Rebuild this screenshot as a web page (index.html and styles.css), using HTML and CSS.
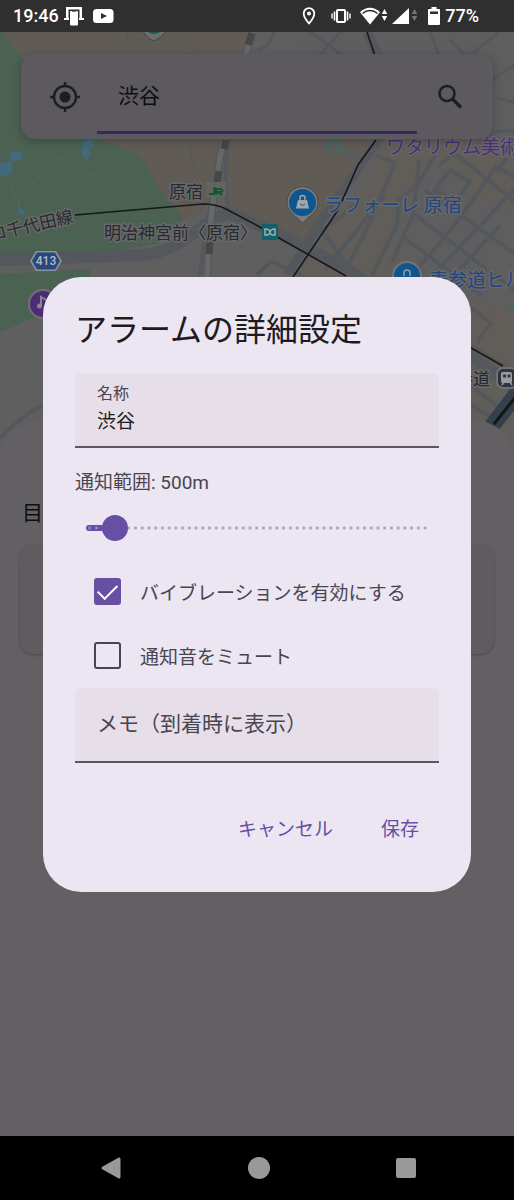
FILE: index.html
```html
<!DOCTYPE html>
<html lang="ja">
<head>
<meta charset="utf-8">
<meta name="viewport" content="width=device-width, initial-scale=1">
<title>アラームの詳細設定</title>
<link rel="stylesheet" href="styles.css">
</head>
<body>
<div class="screen">
  <header class="status">
    <span class="status-text">19:46</span>
    <svg class="ic-cast" width="20" height="20" viewBox="0 0 20 20"><path d="M2 1h16v3h-2.500V3.500h-11V12H2zM15.500 3H18v9h-2.500zM0 12h5v2H0zM15 12h5v2h-5z" fill="#fff"/><rect x="6" y="5" width="8" height="14.500" rx="1" fill="#fff"/><path d="M8 5.500h4" stroke="#777" stroke-width="1"/></svg>
    <svg class="ic-video" width="21" height="16" viewBox="0 0 21 16"><rect x="0" y="1" width="20.500" height="14" rx="3.500" fill="#fff"/><path d="M8 5l6 3-6 3z" fill="#2f2f2f"/></svg>
    <span class="status-space"></span>
    <svg class="ic-pin" width="14" height="18" viewBox="0 0 14 18"><path d="M7 1.200a5.300 5.300 0 0 0-5.300 5.300C1.700 10.400 7 16.500 7 16.500s5.300-6.100 5.300-10A5.300 5.300 0 0 0 7 1.200z" fill="none" stroke="#fff" stroke-width="1.800"/><circle cx="7" cy="6.500" r="2" fill="#fff"/></svg>
    <svg class="ic-vib" width="20" height="16" viewBox="0 0 20 16" stroke="#fff" fill="none"><rect x="6" y="2" width="8" height="12" rx=".8" stroke-width="2"/><path d="M3.500 3.500v9M16.500 3.500v9" stroke-width="1.600"/><path d="M1 5.500v5M19 5.500v5" stroke-width="1.400"/></svg>
    <svg class="ic-wifi" width="28" height="18" viewBox="0 0 28 18"><path d="M10 17.500L0 5.300C5.500-.7 14.500-.7 20 5.300z" fill="#fff"/><path d="M2.500 6.500c4.500-4 10.500-4 15 0" stroke="#2f2f2f" stroke-width="1.300" fill="none"/><path d="M24.500 2l2.700 5h-5.400zM24.500 14l2.700-5h-5.400z" fill="#fff"/></svg>
    <svg class="ic-cell" width="26" height="18" viewBox="0 0 26 18"><path d="M17 1v16H0z" fill="#fff"/><path d="M22.500 2l2.700 5h-5.400zM22.500 14l2.700-5h-5.400z" fill="#777"/></svg>
    <svg class="ic-batt" width="12" height="18" viewBox="0 0 12 18"><path d="M3.500 0h5v2H11q1 0 1 1v14q0 1-1 1H1q-1 0-1-1V3q0-1 1-1h2.500z" fill="#fff"/><path d="M2 4.500h8V7H2z" fill="#2f2f2f"/></svg>
    <span class="status-text">77%</span>
  </header>

  <main class="app">
    <svg class="map" viewBox="0 32 514 430" preserveAspectRatio="xMinYMin slice" role="img" aria-label="地図">
      <rect x="0" y="32" width="514" height="430" fill="#615d58"/>
      <path d="M0 255L200 215 215 32H325L380 160 294 275 240 462H0z" fill="#605f60"/>
      <path d="M3 32H250L212 205 183 220 100 140zM225 135h150l-75 115-75-45z" fill="#605b55"/>
      <path d="M0 32h3L22 58 95 138l33 12 12 5 20 35 23 28-23 25-60 10-100 3z" fill="#4b6152"/>
      <path d="M0 274l90-5v30l-47 15-43 18z" fill="#4b6152"/>
      <path d="M280 32h234v108H380zM395 200l40-35 79 55v90l-130-30z" fill="#5e5e5f"/>
      <!-- ponds and park paths -->
      <g fill="#426a7a"><ellipse cx="5" cy="169" rx="8" ry="7"/><ellipse cx="16" cy="156" rx="7" ry="5"/><path d="M82 156q-1-15 6-17l7 2-3 7-4-1 3 8-4 4zM17 204l4 3 5 9-7-2z"/></g>
      <path d="M5 168l10-10" stroke="#426a7a" stroke-width="3" fill="none"/>
      <path d="M26 190l28-30 20-5 15 19 7 1 30-24M7 178l13 28" stroke="#566a5d" stroke-width="1" stroke-dasharray="5 3" fill="none"/>
      <path d="M127 32v8h45q18 1 23 14M189 138q2 22 6 40" stroke="#515b58" fill="none"/>
      <!-- roads -->
      <g fill="none" stroke="#54585c" stroke-linejoin="round">
        <path d="M0 260l145-5q28-3 65-34l18-8q55 20 125 60l100 70 61 45" stroke-width="12"/>
        <path d="M367 32l12 25 3 78-60 85-35 55" stroke-width="9"/>
        <path d="M230 135q-8 42-2 78M200 275l5-45 23-95" stroke-width="4"/>
        <path d="M257 50q12-2 17-18M302 75l38-43M310 32l35 25M430 32l10 26M450 40l18 18 30-26M492 80l22-15M498 98l16 4M480 140q16-12 34-8" stroke-width="3"/>
        <path d="M375 155l20 8-30 70-22 42M355 205l-45 35M317 225l38 50M325 270l60-75M419 160l-2 25-18 15-2 25-25 50M435 155l-18 32-5 30-20 45M440 165l14-12 60 48M435 190l15-20 20 12-15 20zM425 190l89 63M414 214l100 76M402 236l80 60M514 190l-83 87M497 165l-42 60-45 52M500 225l-50 55M257 275l14-14 30 14" stroke-width="4"/>
        <path d="M471 308l20 15-14 20M471 345l43 28M471 405l20 12M471 385l30 25M497 167l17 10M497 172l9-14" stroke-width="4"/>
        <path d="M0 438q30-30 43-32" stroke-width="4"/>
      </g>
      <path d="M471 345l43-35M480 340l30-38" stroke="#6b5e57" stroke-dasharray="4 3" fill="none"/>
      <path d="M25 345l17 40M28 354l8-3v-8l7-4M31 362l8 2 4-5" stroke="#46695c" fill="none"/>
      <path d="M330 151q0-10 9-11l4 6-5 6zM335 143l4 8M324 152l6-12M344 150l12 10" stroke="#3d6c6d" stroke-width="1.500" fill="none"/>
      <path d="M508 306l6-6v12z" fill="#456b58"/>
      <!-- railways -->
      <path d="M253 32l-8 25-25 100-9 60-4 60" fill="none" stroke="#56595c" stroke-width="8"/>
      <path d="M253 32l-8 25-25 100-9 60-4 60" fill="none" stroke="#676869" stroke-width="5"/>
      <path d="M252 33l-4 12M226 140l-2 9M219 171l-2 12M210 240l-1 14" fill="none" stroke="#474747" stroke-width="7"/>
      <path d="M75 215l128-11q13 0 23 5l32 17 88 50M471 348l32 18M367 32l8 24M376 140l-18 25-20 45-45 67" fill="none" stroke="#171819" stroke-width="1.600"/>
      <path d="M518 392l-26 34" stroke="#34404b" stroke-width="16"/><path d="M518 394l-24 30" stroke="#111619" stroke-width="3"/>
      <path d="M143 31q3 7 11 10 8-3 12-10z" fill="#6c6f6e" stroke="#444"/><path d="M148 32h12q-6 4-12 0" fill="#1c594e"/>
      <path d="M206 182h20v15h-20z" fill="#62645f"/>
      <path d="M214.500 187v5q0 2-2 2H209M216 195v-6h5q3 2 0 3h-4l5 3" fill="none" stroke="#14572d" stroke-width="2"/>
      <path d="M36 251h20l6 10-6 10H36l-6-10z" fill="#8a9399"/>
      <path d="M37 252.500h18l5 8.500-5 8.500H37L32 261z" fill="#26487c"/>
      <text class="route" x="46" y="265" text-anchor="middle">413</text>
      <g class="place">
        <text x="169" y="198">原宿</text>
        <text x="104" y="239">明治神宮前〈原宿〉</text>
        <text x="-9" y="239" transform="rotate(-13 0 239)">ロ千代田線</text>
        <text x="456" y="385">参道</text>
      </g>
      <g class="shop">
        <text x="324" y="212">ラフォーレ 原宿</text>
        <text x="429" y="287">表参道ヒルズ</text>
      </g>
      <text class="museum" x="386" y="154">ワタリウム美術館</text>
      <rect x="262" y="224" width="16" height="16" rx="1" fill="#13606d"/>
      <path d="M265 229q5 0 5 4 0-4 5-4v6h-3l-2-2-2 2h-3z" fill="none" stroke="#a0b0b1" stroke-width="1.500"/>
      <path d="M302.500 223l-8-7.500a15.500 15.500 0 1 1 16 0z" fill="#7b7c7e" stroke="#4b4b4b"/>
      <circle cx="302.500" cy="202.500" r="13.500" fill="#0f568f"/>
      <path d="M298 200h9l2 8.500h-13z" fill="#a3a6a8"/><path d="M300 201v-3q0-2.500 2.500-2.500T305 198v3" fill="none" stroke="#a3a6a8" stroke-width="1.500"/><path d="M300 204q2.500 3 5 0" fill="none" stroke="#0f568f"/>
      <circle cx="407" cy="276" r="15" fill="#737579"/><circle cx="407" cy="276" r="13" fill="#0f568f"/><path d="M404 276v-3q0-3 3-3t3 3v3" fill="none" stroke="#9a9da0" stroke-width="1.500"/>
      <circle cx="43" cy="304" r="15" fill="#716f75"/><circle cx="43" cy="304" r="13" fill="#4c2d72"/><circle cx="39.500" cy="306" r="2.500" fill="#8b8494"/><path d="M41 306v-9l5 3" stroke="#8b8494" stroke-width="2" fill="none"/>
      <rect x="497" y="368" width="20" height="20" rx="6" fill="#2f353e" stroke="#6f7275" stroke-width="2"/><rect x="501" y="372" width="11" height="11" rx="2" fill="#9a9da0"/><path d="M503 374.500h3v3h-3zM507.500 374.500h3v3h-3z" fill="#2f353e"/><path d="M502 385l2-3M512 385l-2-3" stroke="#9a9da0" stroke-width="1.500"/>
    </svg>

    <div class="home">
      <form class="search">
        <button type="button" class="icon-btn" aria-label="現在地">
          <svg width="32" height="32" viewBox="0 0 32 32" fill="none" stroke="#1e1d21" stroke-width="2.400"><circle cx="16" cy="16" r="11"/><path d="M16 1v5M16 26v5M1 16h5M26 16h5"/><circle cx="16" cy="16" r="5.500" fill="#1e1d21" stroke="none"/></svg>
        </button>
        <input class="search-input" type="text" value="渋谷" aria-label="目的地を検索">
        <button type="button" class="icon-btn" aria-label="検索">
          <svg width="28" height="28" viewBox="0 0 28 28" fill="none" stroke="#1e1d21" stroke-width="2.600"><circle cx="11" cy="10.500" r="7.500"/><path d="M16.500 16l8.500 8.500" stroke-width="3.200"/></svg>
        </button>
      </form>
      <section class="sheet">
        <h2 class="sheet-title">目的地</h2>
        <div class="card"></div>
      </section>
    </div>

    <div class="overlay">
      <form class="dialog" role="dialog" aria-labelledby="dlg-title">
        <h1 class="title" id="dlg-title">アラームの詳細設定</h1>
        <div class="field">
          <label class="field-label" for="name">名称</label>
          <input class="field-input" id="name" type="text" value="渋谷">
        </div>
        <label class="range-label" for="range">通知範囲: 500m</label>
        <div class="slider">
          <span class="ticks"></span>
          <span class="active" style="width: 8%"></span>
          <input class="range" id="range" type="range" min="100" max="5100" step="100" value="500">
        </div>
        <label class="check"><input type="checkbox" checked>バイブレーションを有効にする</label>
        <label class="check"><input type="checkbox">通知音をミュート</label>
        <div class="field">
          <input class="memo" type="text" placeholder="メモ（到着時に表示）" aria-label="メモ（到着時に表示）">
        </div>
        <div class="actions">
          <button type="button" class="action">キャンセル</button>
          <button type="button" class="action">保存</button>
        </div>
      </form>
    </div>
  </main>

  <nav class="nav">
    <button type="button" class="nav-btn" aria-label="戻る"><svg width="24" height="24" viewBox="0 0 24 24"><path d="M20 3v18L4 12z" fill="#999" stroke="#999" stroke-width="3" stroke-linejoin="round"/></svg></button>
    <button type="button" class="nav-btn" aria-label="ホーム"><svg width="24" height="24" viewBox="0 0 24 24"><circle cx="12" cy="12" r="11" fill="#999"/></svg></button>
    <button type="button" class="nav-btn" aria-label="履歴"><svg width="24" height="24" viewBox="0 0 24 24"><rect x="2" y="2" width="20" height="20" rx="2" fill="#999"/></svg></button>
  </nav>
</div>
</body>
</html>
```

FILE: styles.css
```css
* { box-sizing: border-box; }

body {
  margin: 0;
  background: #000;
  font-family: Roboto, "Noto Sans CJK JP", sans-serif;
}

button, input { font: inherit; }

button {
  border: 0;
  padding: 0;
  background: none;
}

svg { display: block; flex: none; }

.screen {
  min-height: 100vh;
  display: grid;
  grid-template-rows: 32px 1fr 64px;
}

/* Status bar */
.status {
  display: flex;
  align-items: center;
  padding: 0 35px 0 13px;
  background: #2f2f2f;
  color: #fff;
}

.status-text {
  font-size: 18px;
  line-height: 32px;
  font-weight: 500;
}

.status-space { flex: 1; }
.ic-cast { margin-left: 5px; }
.ic-video { margin-left: 9px; }
.ic-vib { margin-left: 15px; }
.ic-wifi { margin-left: 9px; }
.ic-cell { margin-left: 4px; }
.ic-batt { margin: 0 5px 0 10px; }

/* Home screen, dimmed behind the dialog */
.app {
  display: grid;
  position: relative;
  overflow: hidden;
  background: #636063;
}

.map {
  position: absolute;
  top: 0;
  left: 0;
  width: 100%;
  height: 430px;
}

.map text { font-family: Roboto, "Noto Sans CJK JP", sans-serif; }

.place text, .shop text, .museum {
  paint-order: stroke;
  stroke: #686868;
  stroke-width: 3px;
  stroke-linejoin: round;
}

.place text { font-size: 17px; fill: #272a30; }
.shop text { font-size: 19px; fill: #234581; }
.museum { font-size: 19px; fill: #4b2f78; }
.map .route { font-size: 12px; font-weight: 500; fill: #b5bcc5; }

.home {
  grid-area: 1 / 1;
  position: relative;
  display: flex;
  flex-direction: column;
  gap: 282px;
  padding-top: 22px;
}

.search {
  display: grid;
  grid-template-columns: 76px 1fr 76px;
  height: 85px;
  margin: 0 21px;
  border-radius: 14px;
  background: #5c595f;
  box-shadow: 0 2px 8px rgba(0, 0, 0, .25);
}

.icon-btn {
  display: grid;
  place-items: center;
  padding-left: 11px;
}

.icon-btn:last-child { padding: 0 11px 0 0; }

.search-input {
  min-width: 0;
  height: 80px;
  padding: 2px 21px 0;
  border: 0;
  border-bottom: 3px solid #352a5c;
  background: none;
  color: #0e0d10;
  font-size: 21px;
  outline: none;
}

.sheet {
  flex: 1;
  padding: 76px 20px 0;
  border-radius: 38px 38px 0 0;
  background: #636063;
}

.sheet-title {
  margin: 0 0 16px 2px;
  color: #0e0d10;
  font-size: 21px;
  line-height: 32px;
  font-weight: 400;
}

.card {
  height: 109px;
  border-radius: 14px;
  background: #5e5b61;
  box-shadow: 0 1px 3px rgba(0, 0, 0, .25);
}

/* Dialog */
.overlay {
  grid-area: 1 / 1;
  position: relative;
  display: grid;
  align-items: center;
  padding: 0 43px;
}

.dialog {
  display: flex;
  flex-direction: column;
  padding: 32px 32px 40px;
  border-radius: 38px;
  background: #ece6f3;
  color: #49454f;
  font-size: 19px;
}

.title {
  margin: 0 0 22px;
  color: #1d1b20;
  font-size: 32px;
  line-height: 42px;
  font-weight: 400;
}

.field {
  display: flex;
  flex-direction: column;
  height: 75px;
  border-bottom: 2px solid #5b5661;
  border-radius: 5px 5px 0 0;
  background: #e6dfea;
}

.field-label {
  padding: 9px 22px 0;
  font-size: 16px;
  line-height: 24px;
}

.field-input, .memo {
  width: 100%;
  padding: 0 22px;
  border: 0;
  background: none;
  color: #1d1b20;
  outline: none;
}

.field-input {
  height: 28px;
  font-size: 19px;
}

.memo {
  flex: 1;
  font-size: 21px;
}

.memo::placeholder { color: #49454f; opacity: 1; }

.range-label {
  margin-top: 21px;
  line-height: 28px;
}

.slider {
  position: relative;
  display: grid;
  height: 36px;
  margin: 13px 0 14px;
}

.ticks {
  position: absolute;
  inset: 15px 10px;
  background: radial-gradient(circle, #aaa4b1 0, #aaa4b1 1px, transparent 2px) 0 0 / calc(100% / 51) 100%;
}

.active {
  position: absolute;
  left: 11px;
  top: 15px;
  height: 6px;
  border-radius: 3px;
  background: radial-gradient(circle, #b5a7d3 0, #6750a4 2px) 0 0 / 7px 100%;
}

.range {
  position: relative;
  appearance: none;
  width: 100%;
  margin: 0;
  background: none;
}

.range::-webkit-slider-thumb {
  appearance: none;
  width: 26px;
  height: 26px;
  border-radius: 50%;
  background: #6750a4;
}

.check {
  display: flex;
  align-items: center;
  gap: 19px;
  height: 64px;
  padding-left: 19px;
}

.check input {
  appearance: none;
  display: grid;
  place-items: center;
  width: 27px;
  height: 27px;
  margin: 0;
  border: 2px solid #49454f;
  border-radius: 3px;
}

.check input:checked {
  border-color: #6750a4;
  background: #6750a4;
}

.check input:checked::before {
  content: "";
  width: 17px;
  height: 9px;
  margin-bottom: 5px;
  border: solid #fff;
  border-width: 0 0 2px 2px;
  rotate: -45deg;
}

.actions {
  display: flex;
  justify-content: flex-end;
  gap: 8px;
  margin-top: 41px;
}

.action {
  height: 48px;
  padding: 0 20px;
  color: #6750a4;
  font-size: 19px;
}

/* System navigation */
.nav {
  display: flex;
  justify-content: space-between;
  align-items: center;
  padding: 0 96px 0 99px;
  background: #000;
}
```
